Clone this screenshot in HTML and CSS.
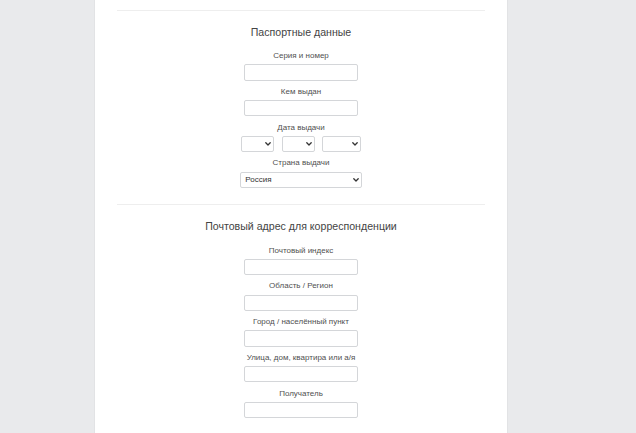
FILE: index.html
```html
<!DOCTYPE html>
<html lang="ru">
<head>
<meta charset="utf-8">
<title>Анкета</title>
<link rel="stylesheet" href="styles.css">
</head>
<body>
<div class="panel">
  <section class="section">
    <h2 class="section-title">Паспортные данные</h2>
    <div class="field">
      <label class="field-label">Серия и номер</label>
      <input class="text-input" type="text">
    </div>
    <div class="field">
      <label class="field-label">Кем выдан</label>
      <input class="text-input" type="text">
    </div>
    <div class="field">
      <label class="field-label">Дата выдачи</label>
      <div class="date-row">
        <div class="select-wrap">
          <select class="select select-day"><option></option></select>
          <svg class="chevron" viewBox="0 0 6 4" width="6" height="4"><path d="M0.8 0.8 L3 3 L5.2 0.8" /></svg>
        </div>
        <div class="select-wrap">
          <select class="select select-month"><option></option></select>
          <svg class="chevron" viewBox="0 0 6 4" width="6" height="4"><path d="M0.8 0.8 L3 3 L5.2 0.8" /></svg>
        </div>
        <div class="select-wrap">
          <select class="select select-year"><option></option></select>
          <svg class="chevron" viewBox="0 0 6 4" width="6" height="4"><path d="M0.8 0.8 L3 3 L5.2 0.8" /></svg>
        </div>
      </div>
    </div>
    <div class="field">
      <label class="field-label">Страна выдачи</label>
      <div class="select-wrap">
        <select class="select select-country"><option>Россия</option></select>
        <svg class="chevron" viewBox="0 0 6 4" width="6" height="4"><path d="M0.8 0.8 L3 3 L5.2 0.8" /></svg>
      </div>
    </div>
  </section>
  <section class="section section-second">
    <h2 class="section-title">Почтовый адрес для корреспонденции</h2>
    <div class="field">
      <label class="field-label">Почтовый индекс</label>
      <input class="text-input" type="text">
    </div>
    <div class="field">
      <label class="field-label">Область / Регион</label>
      <input class="text-input" type="text">
    </div>
    <div class="field">
      <label class="field-label">Город / населённый пункт</label>
      <input class="text-input" type="text">
    </div>
    <div class="field">
      <label class="field-label">Улица, дом, квартира или а/я</label>
      <input class="text-input" type="text">
    </div>
    <div class="field">
      <label class="field-label">Получатель</label>
      <input class="text-input" type="text">
    </div>
  </section>
</div>
</body>
</html>
```

FILE: styles.css
```css
html, body {
  margin: 0;
  padding: 0;
  height: 100%;
  overflow: hidden;
}
body {
  background: #e9eaec;
  font-family: "Liberation Sans", Arial, sans-serif;
  color: #555;
}
.panel {
  box-sizing: border-box;
  width: 412px;
  height: 100%;
  margin-left: 95px;
  padding: 10px 22px 0;
  background: #fff;
  box-shadow: 0 0 1px rgba(0, 0, 0, 0.18);
  overflow: hidden;
}
.section {
  border-top: 1px solid #eeeeee;
  padding-top: 14.5px;
  padding-bottom: 10px;
  display: flex;
  flex-direction: column;
  align-items: center;
}
.section-second {
  padding-top: 15px;
}
.section-title {
  margin: 0 0 12.5px;
  font-size: 10.6px;
  line-height: 13px;
  font-weight: normal;
  color: #444;
}
.field {
  display: flex;
  flex-direction: column;
  align-items: center;
  margin-bottom: 6.2px;
}
.field-label {
  font-size: 8px;
  line-height: 10px;
  margin-bottom: 3.4px;
  color: #505050;
}
.text-input {
  box-sizing: border-box;
  width: 113.4px;
  height: 16.2px;
  margin: 0;
  padding: 0 4px;
  border: 1px solid #d4d6d9;
  border-radius: 2px;
  background: #fff;
  font: 8px "Liberation Sans", Arial, sans-serif;
}
.date-row {
  display: flex;
  gap: 7.7px;
}
.select-wrap {
  position: relative;
  display: flex;
}
.select {
  -webkit-appearance: none;
  appearance: none;
  box-sizing: border-box;
  height: 16.2px;
  margin: 0;
  padding: 0 10px 0 4px;
  border: 1px solid #d4d6d9;
  border-radius: 2px;
  background: #fff;
  color: #333;
  font: 8px "Liberation Sans", Arial, sans-serif;
}
.chevron {
  position: absolute;
  right: 3px;
  top: 6.2px;
  pointer-events: none;
}
.chevron path {
  fill: none;
  stroke: #333;
  stroke-width: 1.3;
  stroke-linecap: round;
  stroke-linejoin: round;
}
.select-day { width: 32.4px; }
.select-month { width: 33px; }
.select-year { width: 38.3px; }
.select-country { width: 121.4px; }
```
